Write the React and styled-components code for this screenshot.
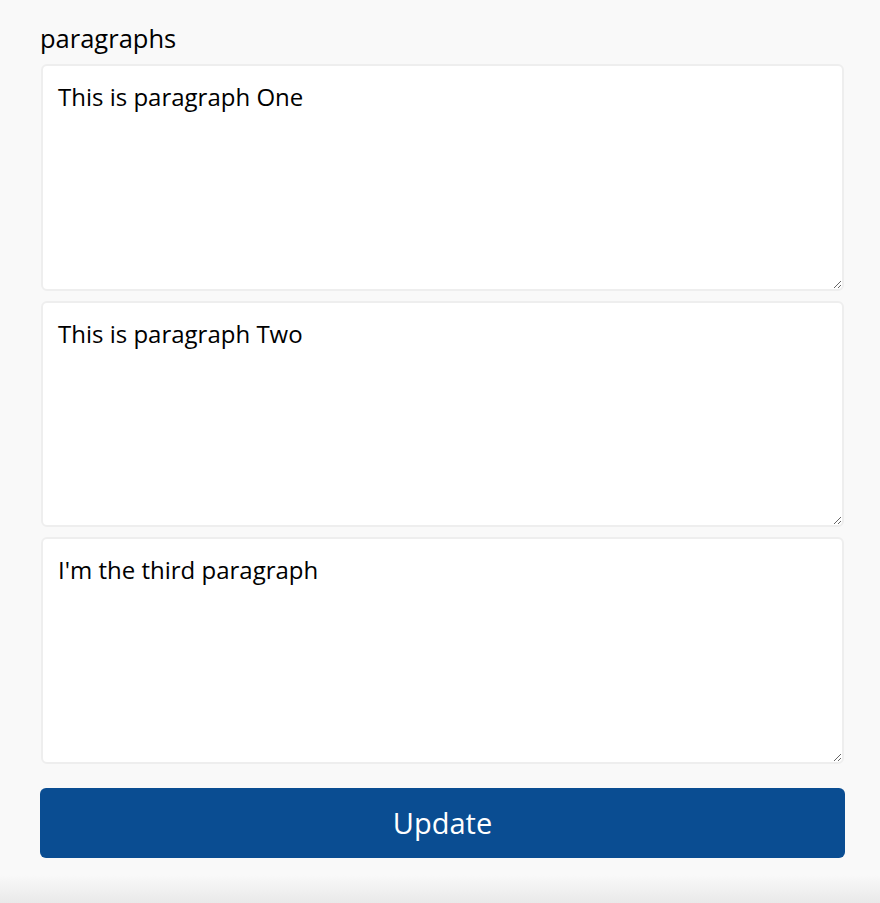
import React, { useState } from "react";
import styled, { createGlobalStyle } from "styled-components";

const GlobalStyle = createGlobalStyle`
  html, body {
    margin: 0;
    padding: 0;
    background: #f9f9f9;
    font-family: "Open Sans", "Noto Sans", sans-serif;
  }
`;

const Page = styled.div`
  min-height: 903px;
  display: flex;
  flex-direction: column;
`;

const Form = styled.form`
  width: 805px;
  padding: 20px 0 0 40px;
  display: flex;
  flex-direction: column;
`;

const Label = styled.label`
  font-size: 25.5px;
  color: #000;
  line-height: 36px;
  margin-bottom: 8px;
`;

const Fields = styled.div`
  display: flex;
  flex-direction: column;
  gap: 10px;
  padding: 0 1px;
`;

const Paragraph = styled.textarea`
  box-sizing: border-box;
  width: 100%;
  height: 226.5px;
  padding: 14px 15px;
  border: 2px solid #eeeeee;
  border-radius: 6px;
  background: #fff;
  font-family: inherit;
  font-size: 24px;
  color: #000;
  outline: none;
  resize: vertical;
`;

const UpdateButton = styled.button`
  margin-top: 24px;
  height: 70px;
  width: 100%;
  border: none;
  border-radius: 6px;
  background: #0a4d92;
  color: #fff;
  font-family: inherit;
  font-size: 29px;
  cursor: pointer;
`;

const BottomShade = styled.div`
  margin-top: auto;
  height: 28px;
  background: linear-gradient(#f9f9f9, #e9e9e9);
`;

export default function App() {
  const [paragraphs, setParagraphs] = useState([
    "This is paragraph One",
    "This is paragraph Two",
    "I'm the third paragraph",
  ]);

  const change = (i, value) => {
    setParagraphs((prev) => prev.map((p, j) => (j === i ? value : p)));
  };

  return (
    <Page>
      <GlobalStyle />
      <Form onSubmit={(e) => e.preventDefault()}>
        <Label>paragraphs</Label>
        <Fields>
          {paragraphs.map((p, i) => (
            <Paragraph key={i} value={p} onChange={(e) => change(i, e.target.value)} />
          ))}
        </Fields>
        <UpdateButton type="submit">Update</UpdateButton>
      </Form>
      <BottomShade />
    </Page>
  );
}
